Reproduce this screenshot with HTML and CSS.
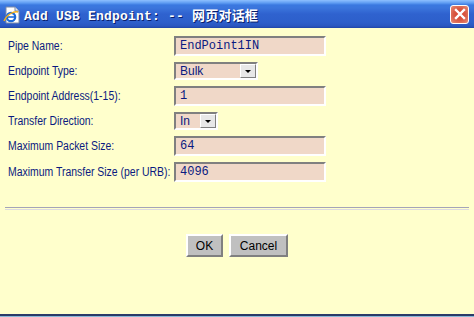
FILE: index.html
```html
<!DOCTYPE html>
<html>
<head>
    <title>Add USB Endpoint</title>
    <link rel="stylesheet" href="styles.css">
</head>
<body>
    <div id="dialog">
        <div class="titlebar">
            <svg class="app-icon" width="18" height="18" viewBox="0 0 18 18">
                <path d="M3 1 H12 L16 5 V17 H3 Z" fill="#fff" stroke="#7a8aa8" stroke-width="1"/>
                <path d="M12 1 V5 H16" fill="#dde4f0" stroke="#7a8aa8" stroke-width="1"/>
                <circle cx="8" cy="11" r="4.2" fill="none" stroke="#1c6ad8" stroke-width="2.2"/>
                <path d="M4 11 H12" stroke="#1c6ad8" stroke-width="1.6"/>
                <path d="M1 15 C4 8 11 5 15 6" fill="none" stroke="#f0b020" stroke-width="1.4"/>
            </svg>
            <span class="title">Add USB Endpoint: -- 网页对话框</span>
            <div class="close">
                <svg width="12" height="12" viewBox="0 0 12 12">
                    <path d="M2 2 L10 10 M10 2 L2 10" stroke="#fff" stroke-width="2.4" stroke-linecap="square"/>
                </svg>
            </div>
        </div>

        <div class="content">
            <form class="fields">
                <label>Pipe Name:</label>
                <input type="text" class="field wide" value="EndPoint1IN" />

                <label>Endpoint Type:</label>
                <div class="select type">
                    <span>Bulk</span>
                    <span class="arrow"></span>
                </div>

                <label>Endpoint Address(1-15):</label>
                <input type="text" class="field wide" value="1" />

                <label>Transfer Direction:</label>
                <div class="select dir">
                    <span>In</span>
                    <span class="arrow"></span>
                </div>

                <label>Maximum Packet Size:</label>
                <input type="text" class="field wide" value="64" />

                <label>Maximum Transfer Size (per URB):</label>
                <input type="text" class="field wide" value="4096" />
            </form>

            <div class="separator"></div>

            <div class="buttons">
                <button class="button ok">OK</button>
                <button class="button cancel">Cancel</button>
            </div>
        </div>
        <div class="bottom-edge"></div>
    </div>
</body>
</html>
```

FILE: styles.css
```css
body {
    margin: 0;
    font-family: "Liberation Sans", Arial, sans-serif;
    background-color: #ffffcc;
}
#dialog {
    width: 474px;
    height: 317px;
    display: flex;
    flex-direction: column;
    background-color: #ffffcc;
}
.titlebar {
    height: 28px;
    display: flex;
    align-items: center;
    padding: 0 5px 0 3px;
    box-sizing: border-box;
    background: linear-gradient(to bottom, #8ec0ff 0px, #5e9cf2 3px, #3a78e0 5px, #3b75dc 8px, #2f62cf 14px, #2d5fcb 22px, #2a57c0 26px, #1f45a8 28px);
}
.app-icon {
    margin-right: 3px;
    margin-top: 1px;
}
.title {
    flex: 1;
    color: #fff;
    font-family: "Liberation Mono", "Noto Sans CJK SC", monospace;
    font-weight: bold;
    font-size: 13px;
    text-shadow: 1px 1px 0 #0a1e6a;
    letter-spacing: 0.2px;
}
.close {
    width: 19px;
    height: 19px;
    box-sizing: border-box;
    border: 1px solid #fff;
    border-radius: 3px;
    background: radial-gradient(circle at 50% 50%, #d8402c 0, #d85a44 50%, #e8907a 100%);
    display: flex;
    align-items: center;
    justify-content: center;
}
.content {
    flex: 1;
    padding: 8px 5px 0 5px;
}
.fields {
    margin: 0;
    display: grid;
    grid-template-columns: 166px auto;
    grid-template-rows: 20px 18px 20px 18px 20px 20px;
    row-gap: 6px;
    align-items: center;
    padding-left: 3px;
}
.fields label {
    color: #0a1a80;
    font-size: 12px;
    white-space: nowrap;
    transform: scaleX(0.87);
    transform-origin: left center;
}
.field {
    box-sizing: border-box;
    height: 20px;
    margin: 0;
    padding: 0 0 0 4px;
    background-color: #f0d8c8;
    border: 2px solid;
    border-color: #808080 #ffffff #ffffff #808080;
    color: #0a1a80;
    font-family: "Liberation Mono", monospace;
    font-size: 12px;
}
.field.wide {
    width: 152px;
}
.select {
    box-sizing: border-box;
    height: 18px;
    display: flex;
    align-items: center;
    justify-content: space-between;
    background-color: #f0d8c8;
    border: 2px solid;
    border-color: #808080 #ffffff #ffffff #808080;
    color: #0a1a80;
    font-size: 12px;
    padding-left: 4px;
}
.select.type {
    width: 84px;
}
.select.dir {
    width: 44px;
}
.arrow {
    width: 16px;
    height: 14px;
    box-sizing: border-box;
    background-color: #e8e8e8;
    border: 1px solid;
    border-color: #ffffff #808080 #808080 #ffffff;
    position: relative;
}
.arrow::after {
    content: "";
    position: absolute;
    left: 4px;
    top: 5px;
    border-left: 3px solid transparent;
    border-right: 3px solid transparent;
    border-top: 3px solid #000;
}
.separator {
    margin-top: 25px;
    height: 1px;
    border-top: 1px solid #a4a4b8;
    border-bottom: 1px solid #dcdce0;
}
.buttons {
    display: flex;
    justify-content: center;
    gap: 6px;
    margin-top: 24px;
}
.button {
    height: 23px;
    box-sizing: border-box;
    background-color: #c0c0c0;
    border: 2px solid;
    border-color: #ffffff #808080 #808080 #ffffff;
    font-family: "Liberation Sans", Arial, sans-serif;
    font-size: 12px;
    color: #000;
    padding: 0;
}
.button.ok {
    width: 37px;
}
.button.cancel {
    width: 59px;
}
.bottom-edge {
    height: 3px;
    border-top: 2px solid #2a3a68;
    background-color: #8ab8d8;
    box-sizing: border-box;
}
```
